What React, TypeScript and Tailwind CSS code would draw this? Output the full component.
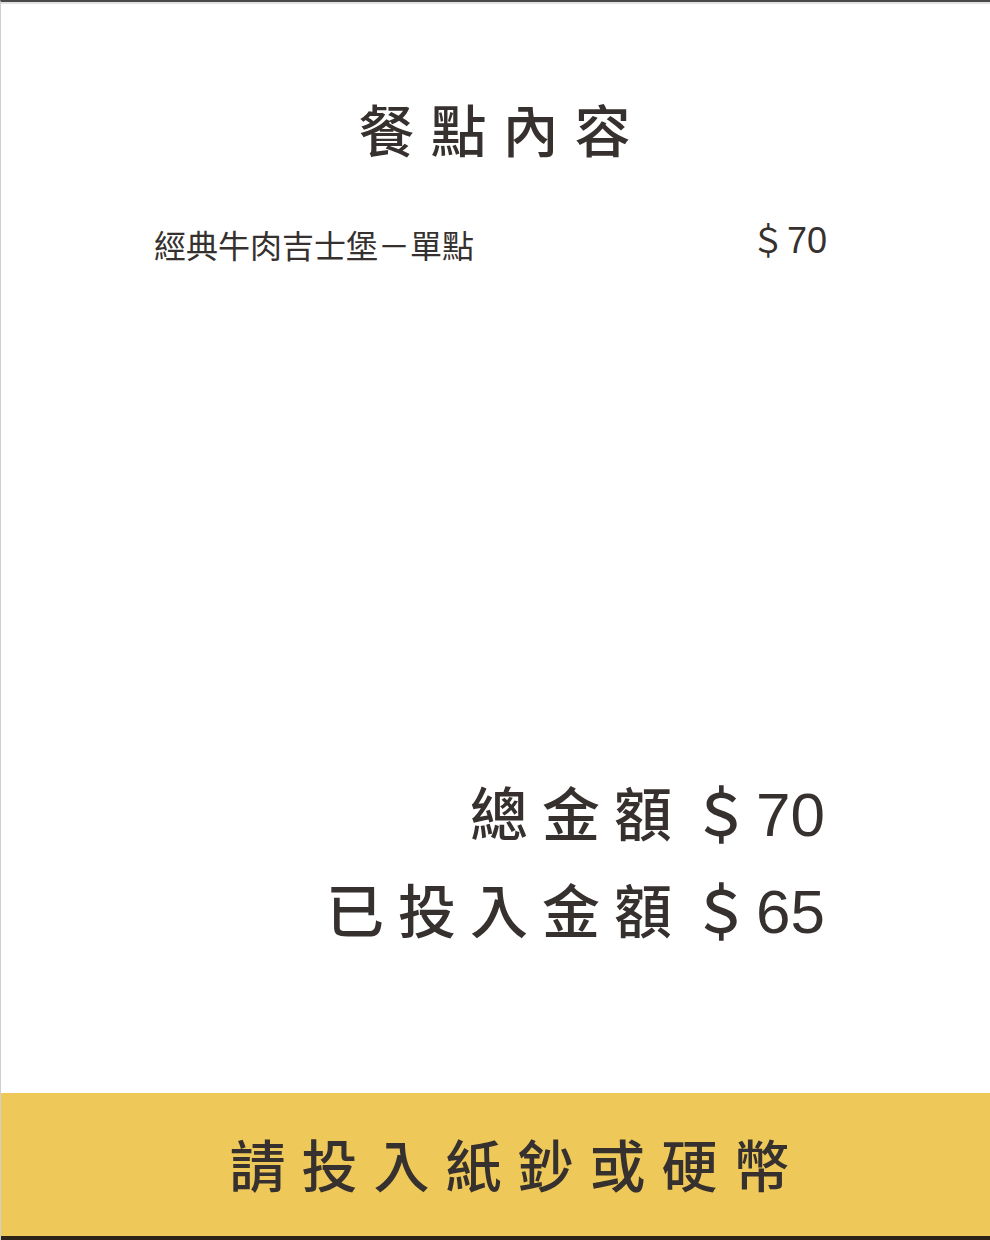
const font = {
  fontFamily: '"Noto Sans CJK TC", "Noto Sans", sans-serif',
};

const digits = {
  fontFamily: '"Liberation Sans", "Noto Sans CJK TC", sans-serif',
};

function Price({
  value,
  className,
  digitClass,
}: {
  value: string;
  className: string;
  digitClass: string;
}) {
  return (
    <span className={`flex items-baseline ${className}`}>
      <span>＄</span>
      <span className={digitClass} style={digits}>
        {value}
      </span>
    </span>
  );
}

function PriceLine({ label, price }: { label: string; price: string }) {
  return (
    <div className="flex items-baseline justify-end text-[58px] font-medium leading-none text-[#36312f]">
      <span className="tracking-[14px]">{label}</span>
      <Price
        value={price}
        className="ml-[6px] gap-[6px]"
        digitClass="text-[62px] font-normal leading-none"
      />
    </div>
  );
}

function App() {
  return (
    <div
      className="flex h-[1240px] w-[990px] flex-col overflow-hidden border-t-2 border-l border-t-[#4a4a4a] border-l-[#cfcfcf] bg-white"
      style={font}
    >
      <div className="h-[2px] bg-[#e2e2e2]" />
      <main className="flex flex-1 flex-col px-[153px]">
        <h1 className="mt-[96px] pl-[14px] text-center text-[56px] font-medium leading-none tracking-[16px] text-[#36312f]">
          餐點內容
        </h1>
        <div className="mt-[64px] flex items-start justify-between pr-[10px] text-[#36312f]">
          <span className="mt-[8px] text-[32px] leading-none">經典牛肉吉士堡－單點</span>
          <Price
            value="70"
            className="mt-[2px] gap-[2px] text-[34px] leading-none"
            digitClass="text-[36px] leading-none"
          />
        </div>
        <div className="mt-auto mb-[150px] flex flex-col gap-[33px] pr-[12px]">
          <PriceLine label="總金額" price="70" />
          <PriceLine label="已投入金額" price="65" />
        </div>
      </main>
      <button className="flex h-[143px] items-center justify-center bg-[#eec95a] pb-[4px] pl-[44px] text-[56px] font-medium tracking-[16px] text-[#36312f]">
        請投入紙鈔或硬幣
      </button>
      <div className="h-[4px] bg-[#2b2218]" />
    </div>
  );
}

export default App;
